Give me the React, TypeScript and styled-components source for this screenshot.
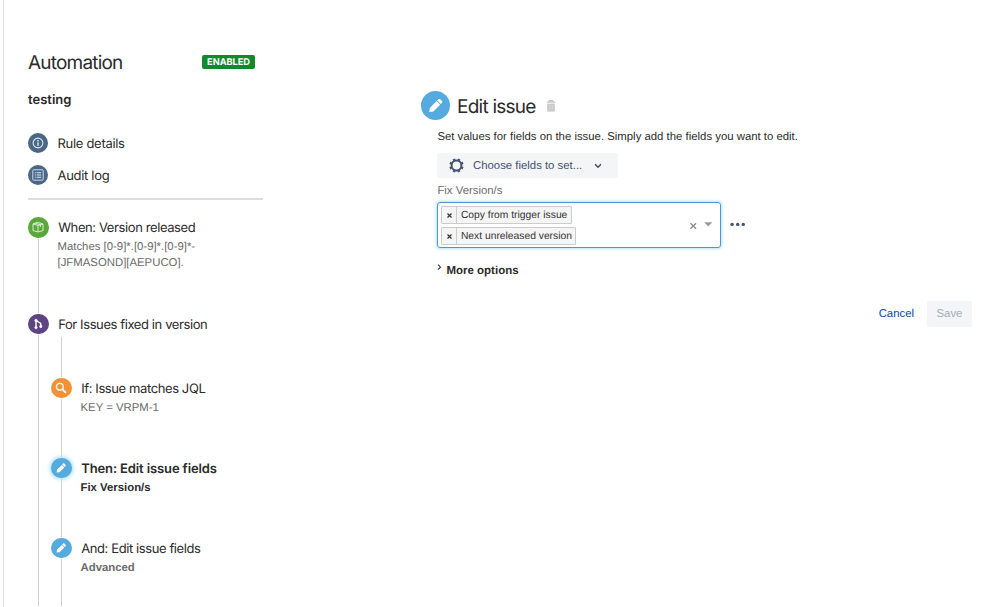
import React from 'react';
import styled, { createGlobalStyle, css } from 'styled-components';

const GlobalStyle = createGlobalStyle`
  * {
    box-sizing: border-box;
  }

  body {
    margin: 0;
    background: #fff;
    color: #2b2b2b;
    font-family: 'Liberation Sans', Arial, sans-serif;
    font-size: 11.37px;
    text-rendering: geometricPrecision;
  }

  button {
    padding: 0;
    border: 0;
    background: none;
    color: inherit;
    font: inherit;
    text-rendering: inherit;
    cursor: pointer;
  }
`;

const uiFont = css`
  font-family: Inter, 'Liberation Sans', sans-serif;
`;

const Page = styled.div`
  display: flex;
  width: 999px;
  height: 607px;
  padding-left: 3px;
  overflow: hidden;
`;

const Sidebar = styled.aside`
  display: flex;
  flex-direction: column;
  flex: 0 0 260px;
  height: 607px;
  padding: 51px 0 0 24px;
  border-left: 1px solid #e2e2e2;
`;

const SidebarHeader = styled.header`
  display: flex;
  align-items: center;
  justify-content: space-between;
  height: 22px;
  padding-right: 8px;
`;

const SidebarTitle = styled.h1`
  ${uiFont}
  margin: 0;
  padding-top: 2px;
  font-size: 19px;
  font-weight: 400;
  line-height: 22px;
  letter-spacing: -0.8px;
`;

const Lozenge = styled.span`
  ${uiFont}
  height: 14px;
  padding: 0 5px;
  border-radius: 2px;
  background: #14892c;
  color: #fff;
  font-size: 9.2px;
  font-weight: 700;
  line-height: 15px;
`;

const RuleName = styled.h2`
  ${uiFont}
  margin: 17px 0 23px;
  font-size: 13px;
  font-weight: 600;
  line-height: 20px;
`;

const NavItem = styled.a`
  ${uiFont}
  display: flex;
  align-items: center;
  gap: 9.5px;
  height: 20px;
  margin: 0 0 12px -0.5px;
  font-size: 13px;
  line-height: 20px;
  letter-spacing: -0.3px;

  & > span:last-child {
    padding-top: 2px;
  }
`;

const Divider = styled.hr`
  flex: 0 0 2px;
  width: 235px;
  margin: 1px 0 17px;
  border: 0;
  background: #ddd;
`;

const Circle = styled.span<{ color: string; size?: number; active?: boolean }>`
  display: flex;
  align-items: center;
  justify-content: center;
  flex: none;
  width: ${({ size = 20.5 }) => size}px;
  height: ${({ size = 20.5 }) => size}px;
  border-radius: 50%;
  background: ${({ color }) => color};
  box-shadow: ${({ active }) => (active ? '0 0 4px 1px #9fdcfb' : 'none')};
  color: #fff;
`;

const StepRow = styled.div<{ height?: number }>`
  display: flex;
  gap: 10px;
  flex: ${({ height }) => (height ? `0 0 ${height}px` : '1')};
`;

const Rail = styled.div`
  display: flex;
  flex-direction: column;
  align-items: center;
  flex: 0 0 20.5px;
`;

const RailLine = styled.div<{ height?: number }>`
  flex: ${({ height }) => (height ? `0 0 ${height}px` : '1')};
  width: 1px;
  margin: 1px 0;
  background: #d0d0d0;
`;

const StepBody = styled.div`
  display: flex;
  flex-direction: column;
  flex: 1;
  min-width: 0;
`;

const StepTitle = styled.div<{ active?: boolean }>`
  ${uiFont}
  margin-left: -0.3px;
  padding-top: 1px;
  font-size: 13px;
  font-weight: ${({ active }) => (active ? 600 : 400)};
  line-height: 21px;
  letter-spacing: ${({ active }) => (active ? '-0.12px' : '-0.4px')};
  white-space: nowrap;
`;

const StepInfo = styled.div<{ active?: boolean; strong?: boolean }>`
  margin-left: -1px;
  color: ${({ active }) => (active ? '#2b2b2b' : '#6a6a6a')};
  font-weight: ${({ active, strong }) => (active || strong ? 700 : 400)};
  line-height: 16px;
  white-space: pre-line;
`;

const Branch = styled.div`
  display: flex;
  flex-direction: column;
  flex: 1;
  margin-left: -7.5px;
`;

const BranchStart = styled.div`
  display: flex;
  flex-direction: column;
  align-items: center;
  width: 20.5px;
`;

const Main = styled.main`
  flex: 1;
  padding: 91px 27px 0 158px;
`;

const PanelHeader = styled.header`
  display: flex;
  align-items: center;
  height: 29px;
`;

const PanelTitle = styled.h2`
  ${uiFont}
  margin: 1px 10px 0 7px;
  font-size: 19px;
  font-weight: 400;
  line-height: 29px;
  letter-spacing: -0.75px;
`;

const Panel = styled.section`
  padding-left: 16.4px;
`;

const Description = styled.p`
  margin: 9px 0 8px;
  line-height: 16px;
`;

const FieldPicker = styled.button`
  display: flex;
  align-items: center;
  width: 181px;
  height: 25px;
  padding-left: 11.6px;
  border-radius: 2px;
  background: #f4f5f7;
  color: #42526e;

  & span {
    width: 130px;
    padding-left: 9px;
    text-align: left;
  }
`;

const FieldLabel = styled.label`
  display: block;
  margin: 5px 0 3px;
  color: #6b6b6b;
  line-height: 16px;
`;

const FieldRow = styled.div`
  display: flex;
  align-items: center;
  gap: 8.5px;
`;

const MultiSelect = styled.div`
  display: flex;
  align-items: center;
  width: 284px;
  height: 46px;
  padding: 0 7px 0 3px;
  border: 1.5px solid #4a96dc;
  border-radius: 3px;
  box-shadow: 0 0 3px 1px #b9e2fa;
`;

const Tags = styled.div`
  display: flex;
  flex-direction: column;
  align-items: flex-start;
  gap: 3px;
  flex: 1;
`;

const TagBox = styled.div`
  display: flex;
  height: 18px;
  border: 1px solid #ccc;
  border-radius: 1px;
  background: #f5f5f5;
  color: #333;
  font-size: 10.3px;
  line-height: 17px;

  & button {
    width: 15px;
    border-right: 1px solid #ccc;
  }

  & span {
    padding: 0 3.5px;
  }
`;

const MoreOptions = styled.button`
  display: flex;
  align-items: flex-start;
  gap: 4px;
  margin-top: 15px;
  font-size: 11.5px;
  font-weight: 700;
  line-height: 16px;
`;

const Actions = styled.footer`
  display: flex;
  justify-content: flex-end;
  gap: 13px;
  margin-top: 22px;
`;

const ActionButton = styled.button<{ subtle?: boolean }>`
  width: ${({ subtle }) => (subtle ? 'auto' : '45px')};
  height: 26px;
  border-radius: 2px;
  background: ${({ subtle }) => (subtle ? 'none' : '#f4f5f7')};
  color: ${({ subtle }) => (subtle ? '#0747a6' : '#a5adba')};
`;

const PencilIcon = ({ size = 12 }: { size?: number }) => (
  <svg width={size} height={size} viewBox='0 0 12 12' fill='currentColor'>
    <path d='M2 7.7 L6.8 2.9 L9.3 5.4 L4.5 10.2 L1.6 10.6 Z' />
    <path d='M7.2 2.5 L8.1 1.6 Q8.7 1.1 9.3 1.6 L10.6 2.9 Q11.1 3.5 10.6 4.1 L9.7 5 Z' />
  </svg>
);

const InfoIcon = () => (
  <svg width='12' height='12' viewBox='0 0 12 12' fill='none' stroke='#dce9f7'>
    <circle cx='6' cy='6' r='4.9' strokeWidth='1.1' />
    <path d='M6 5.2V8.8M6 3V4.4' strokeWidth='1.4' />
  </svg>
);

const LogIcon = () => (
  <svg width='12' height='12' viewBox='0 0 12 12' fill='none' stroke='#c6d9ee'>
    <rect x='0.8' y='0.8' width='10.4' height='10.4' rx='0.8' strokeWidth='1' />
    <path d='M2.8 3.5H3.8M2.8 5.2H3.8M2.8 6.9H3.8M2.8 8.6H3.8M4.6 3.5H9.2M4.6 5.2H9.2M4.6 6.9H9.2M4.6 8.6H9.2' strokeWidth='0.9' />
  </svg>
);

const BoxIcon = () => (
  <svg width='12' height='12' viewBox='0 0 12 12' fill='none' stroke='#e4f5de' strokeWidth='0.9' strokeLinejoin='round'>
    <path d='M1 3L6 4.4L11 3V9.6L6 11L1 9.6ZM1 3L5.6 1.3L11 3M6 4.4V11M3.4 2.2L8.4 3.7V6' />
  </svg>
);

const BranchIcon = () => (
  <svg width='12' height='12' viewBox='0 0 12 12' fill='none' stroke='#fff' strokeWidth='1.4'>
    <path d='M4 2.5V9.5M4 2.5L8.7 5.5V8' />
    <circle cx='4' cy='2.4' r='1.2' fill='#fff' strokeWidth='0.6' />
    <circle cx='4' cy='9.6' r='1.2' fill='#fff' strokeWidth='0.6' />
    <circle cx='8.8' cy='8.5' r='1.2' fill='#fff' strokeWidth='0.6' />
  </svg>
);

const SearchIcon = () => (
  <svg width='12' height='12' viewBox='0 0 12 12' fill='none' stroke='#fff'>
    <circle cx='4.8' cy='4.8' r='3.4' strokeWidth='1.3' />
    <path d='M7.4 7.4L10.4 10.4' strokeWidth='1.9' strokeLinecap='round' />
  </svg>
);

const TrashIcon = () => (
  <svg width='10' height='13' viewBox='0 0 10 13' fill='none'>
    <path d='M3.4 2.4V1.6H6.6V2.4M0.7 3.2H9.3' stroke='#c4c4c4' strokeWidth='1.2' />
    <path d='M1.2 4.6H8.8V12.6H1.2Z' fill='#c8c8c8' />
    <path d='M3.5 5.8V11.4M5 5.8V11.4M6.5 5.8V11.4' stroke='#dedede' strokeWidth='0.6' />
  </svg>
);

const GearIcon = () => (
  <svg width='15' height='15' viewBox='0 0 15 15' fill='none' stroke='#42526e'>
    <circle cx='7.5' cy='7.5' r='4.9' strokeWidth='2' />
    {[22.5, 67.5, 112.5, 157.5, 202.5, 247.5, 292.5, 337.5].map(angle => (
      <path key={angle} d='M7.5 2V0.4' strokeWidth='2.6' transform={`rotate(${angle} 7.5 7.5)`} />
    ))}
  </svg>
);

const ChevronIcon = () => (
  <svg width='8' height='6' viewBox='0 0 8 6' fill='none'>
    <path d='M1.5 1.7L4 4.2L6.5 1.7' stroke='#42526e' strokeWidth='1.6' strokeLinecap='round' />
  </svg>
);

const SelectIcons = () => (
  <svg width='24' height='10' viewBox='0 0 24 10' fill='none'>
    <path d='M1.5 3.3L7 8.8M7 3.3L1.5 8.8' stroke='#8c8c8c' strokeWidth='1.4' />
    <path d='M15.3 2.3H23.3L19.3 6.5Z' fill='#999' />
  </svg>
);

const DotsIcon = () => (
  <svg width='16' height='6' viewBox='0 0 16 6' fill='#42526e'>
    <circle cx='2.1' cy='2.4' r='1.7' />
    <circle cx='7.7' cy='2.4' r='1.7' />
    <circle cx='13.3' cy='2.4' r='1.7' />
  </svg>
);

const ArrowIcon = () => (
  <svg width='5' height='9' viewBox='0 0 5 9' fill='none'>
    <path d='M1 1.7L3.5 4.2L1 6.7' stroke='#333' strokeWidth='1.1' />
  </svg>
);

const TagCross = () => (
  <svg width='5' height='5' viewBox='0 0 5 5' fill='none'>
    <path d='M0.5 0.5L4.5 4.5M4.5 0.5L0.5 4.5' stroke='#333' strokeWidth='1.2' />
  </svg>
);

interface StepProps {
  icon: React.ReactNode;
  color: string;
  title: string;
  info?: string;
  height?: number;
  active?: boolean;
  strong?: boolean;
  children?: React.ReactNode;
}

const Step: React.FC<StepProps> = ({ icon, color, title, info, height, active, strong, children }) => {
  return (
    <StepRow height={height}>
      <Rail>
        <Circle color={color} active={active}>
          {icon}
        </Circle>
        <RailLine />
      </Rail>
      <StepBody>
        <StepTitle active={active}>{title}</StepTitle>
        {info && (
          <StepInfo active={active} strong={strong}>
            {info}
          </StepInfo>
        )}
        {children}
      </StepBody>
    </StepRow>
  );
};

const Tag: React.FC<{ label: string }> = ({ label }) => {
  return (
    <TagBox>
      <button>
        <TagCross />
      </button>
      <span>{label}</span>
    </TagBox>
  );
};

const App: React.FC = () => {
  return (
    <>
      <GlobalStyle />
      <Page>
        <Sidebar>
          <SidebarHeader>
            <SidebarTitle>Automation</SidebarTitle>
            <Lozenge>ENABLED</Lozenge>
          </SidebarHeader>
          <RuleName>testing</RuleName>
          <NavItem>
            <Circle color='#4a6785'>
              <InfoIcon />
            </Circle>
            <span>Rule details</span>
          </NavItem>
          <NavItem>
            <Circle color='#4a6785'>
              <LogIcon />
            </Circle>
            <span>Audit log</span>
          </NavItem>
          <Divider />
          <Step
            icon={<BoxIcon />}
            color='#5aa83c'
            title='When: Version released'
            info={'Matches [0-9]*.[0-9]*.[0-9]*-\n[JFMASOND][AEPUCO].'}
            height={96.5}
          />
          <Step icon={<BranchIcon />} color='#5e4482' title='For Issues fixed in version'>
            <Branch>
              <BranchStart>
                <RailLine height={40} />
              </BranchStart>
              <Step
                icon={<SearchIcon />}
                color='#f29135'
                title='If: Issue matches JQL'
                info='KEY = VRPM-1'
                height={80}
              />
              <Step
                icon={<PencilIcon />}
                color='#55abde'
                title='Then: Edit issue fields'
                info='Fix Version/s'
                height={80}
                active
              />
              <Step icon={<PencilIcon />} color='#55abde' title='And: Edit issue fields' info='Advanced' strong />
            </Branch>
          </Step>
        </Sidebar>
        <Main>
          <PanelHeader>
            <Circle color='#55abde' size={29}>
              <PencilIcon size={17} />
            </Circle>
            <PanelTitle>Edit issue</PanelTitle>
            <TrashIcon />
          </PanelHeader>
          <Panel>
            <Description>Set values for fields on the issue. Simply add the fields you want to edit.</Description>
            <FieldPicker>
              <GearIcon />
              <span>Choose fields to set...</span>
              <ChevronIcon />
            </FieldPicker>
            <FieldLabel>Fix Version/s</FieldLabel>
            <FieldRow>
              <MultiSelect>
                <Tags>
                  <Tag label='Copy from trigger issue' />
                  <Tag label='Next unreleased version' />
                </Tags>
                <SelectIcons />
              </MultiSelect>
              <DotsIcon />
            </FieldRow>
            <MoreOptions>
              <ArrowIcon />
              More options
            </MoreOptions>
          </Panel>
          <Actions>
            <ActionButton subtle>Cancel</ActionButton>
            <ActionButton>Save</ActionButton>
          </Actions>
        </Main>
      </Page>
    </>
  );
};

export default App;
